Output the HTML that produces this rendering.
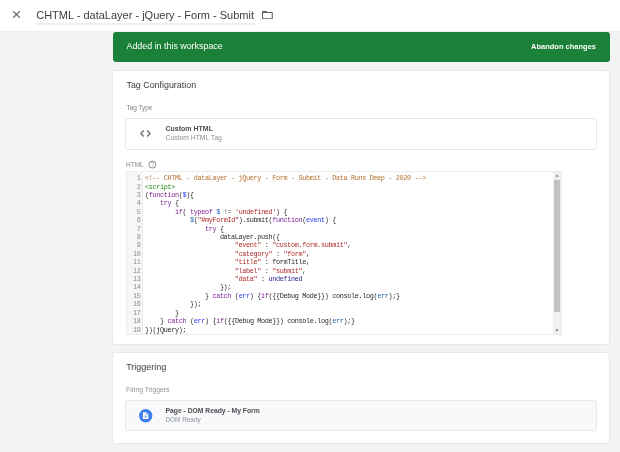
<!DOCTYPE html>
<html><head><meta charset="utf-8">
<style>
*{margin:0;padding:0;box-sizing:border-box}
html,body{width:620px;height:452px;overflow:hidden}
#root{position:absolute;left:0;top:0;width:620px;height:452px;overflow:hidden;will-change:transform}
body{background:#f1f3f4;font-family:"Liberation Sans",sans-serif;position:relative;color:#202124}
.abs{position:absolute;white-space:pre;line-height:1}
#hdr{position:absolute;left:0;top:0;width:620px;height:31px;background:#fff;box-shadow:0 0.5px 1.5px rgba(0,0,0,0.06)}
#green{position:absolute;left:113px;top:32px;width:496.5px;height:29.8px;background:#1b8038;border-radius:3px}
.card{position:absolute;left:113px;width:496px;background:#fff;border-radius:3px;box-shadow:0 0 0 1px #e6e8eb}
.box{position:absolute;left:125px;width:472px;border:1px solid #e5e7ea;border-radius:3px}
#editor{position:absolute;left:126px;top:171px;width:436px;height:163.5px;border:1px solid #ececec;background:#fff;overflow:hidden}
#gutter{position:absolute;left:0;top:0;width:15.5px;height:100%;background:#f7f7f7;border-right:1px solid #ececec}
.ln{position:absolute;right:1.5px;font-family:"Liberation Mono",monospace;font-size:6.8px;letter-spacing:-0.335px;color:#8c8c8c;line-height:8.4px}
#code{position:absolute;left:18px;top:2.2px;font-family:"Liberation Mono",monospace;font-size:6.8px;letter-spacing:-0.335px;line-height:8.4px;color:#2a2a2a;white-space:pre}
.k{color:#80259a}.d{color:#2a3cf0}.v{color:#1f62b0}.s{color:#b02a2a}.c{color:#b5702f}.t{color:#2c8a24}.a{color:#30289e}.o{color:#555}
#sb{position:absolute;right:0;top:0;width:8.2px;height:100%;background:#f1f1f1}
#thumb{position:absolute;left:1px;top:7.5px;width:6.3px;height:132px;background:#c1c1c1}
</style></head>
<body>
<div id="root">
<div id="hdr">
  <svg style="position:absolute;left:12px;top:10.4px" width="9" height="9" viewBox="0 0 9 9"><path d="M1.2 1.2L7.8 7.8M7.8 1.2L1.2 7.8" stroke="#717171" stroke-width="1.25"/></svg>
  <div class="abs" style="left:36.2px;top:9.7px;font-size:11px;color:#3c4043">CHTML - dataLayer - jQuery - Form - Submit</div>
  <div style="position:absolute;left:36px;top:23px;width:218.5px;height:1.7px;background:#eeeeee"></div>
  <svg style="position:absolute;left:262.1px;top:10.6px" width="10.8" height="8.3" viewBox="2 4 20 16" preserveAspectRatio="none"><path d="M20 6h-8l-2-2H4c-1.1 0-2 .9-2 2v12c0 1.1.9 2 2 2h16c1.1 0 2-.9 2-2V8c0-1.1-.9-2-2-2zm0 12H4V8h16v10z" fill="#636363"/></svg>
</div>

<div id="green">
  <div class="abs" style="left:13.5px;top:9.5px;font-size:8.9px;color:#fff">Added in this workspace</div>
  <div class="abs" style="right:13.5px;top:10.5px;font-size:7.5px;color:#fff;font-weight:bold">Abandon changes</div>
</div>

<div class="card" style="top:70.5px;height:273.2px">
  <div class="abs" style="left:13.5px;top:10.5px;font-size:8.9px;color:#3c4043">Tag Configuration</div>
  <div class="abs" style="left:13.5px;top:34.5px;font-size:6.4px;color:#80868b">Tag Type</div>
</div>
<div class="box" style="top:118.3px;height:31.5px;background:#fff">
  <svg style="position:absolute;left:14.4px;top:10.4px" width="11" height="7" viewBox="0 0 11 7"><path d="M3.7 0.5L0.8 3.5L3.7 6.5M7.1 0.5L10.1 3.5L7.1 6.5" fill="none" stroke="#666" stroke-width="1.25"/></svg>
  <div class="abs" style="left:39.5px;top:5.7px;font-size:7px;font-weight:bold;color:#4a4d51">Custom HTML</div>
  <div class="abs" style="left:39.5px;top:15.8px;font-size:6.8px;color:#8a8e93">Custom HTML Tag</div>
</div>
<div class="abs" style="left:126px;top:161.5px;font-size:6.5px;color:#80868b">HTML</div>
<svg style="position:absolute;left:148.1px;top:159.8px" width="9" height="9" viewBox="0 0 9 9"><circle cx="4.4" cy="4.5" r="3.5" fill="none" stroke="#6f7378" stroke-width="0.8"/><path d="M3.3 3.5a1.15 1.15 0 1 1 1.6 1.1c-.35.2-.45.4-.45.8" fill="none" stroke="#8a8e93" stroke-width="0.7"/><circle cx="4.45" cy="6.5" r="0.4" fill="#8a8e93"/></svg>

<div id="editor">
  <div id="gutter"></div>
  <div class="ln" style="top:2.2px;right:auto;left:0;width:13.6px;text-align:right;white-space:pre">1
2
3
4
5
6
7
8
9
10
11
12
13
14
15
16
17
18
19</div>
<div id="code"><span class="c">&lt;!-- CHTML - dataLayer - jQuery - Form - Submit - Data Runs Deep - 2020 --&gt;</span>
<span class="t">&lt;script&gt;</span>
(<span class="k">function</span>(<span class="d">$</span>){
    <span class="k">try</span> {
        <span class="k">if</span>( <span class="k">typeof</span> <span class="v">$</span> <span class="o">!=</span> <span class="s">'undefined'</span>) {
            <span class="v">$</span>(<span class="s">"#myFormId"</span>).submit(<span class="k">function</span>(<span class="d">event</span>) {
                <span class="k">try</span> {
                    dataLayer.push({
                        <span class="s">"event"</span> : <span class="s">"custom.form.submit"</span>,
                        <span class="s">"category"</span> : <span class="s">"form"</span>,
                        <span class="s">"title"</span> : formTitle,
                        <span class="s">"label"</span> : <span class="s">"submit"</span>,
                        <span class="s">"data"</span> : <span class="a">undefined</span>
                    });
                } <span class="k">catch</span> (<span class="d">err</span>) {<span class="k">if</span>({{Debug Mode}}) console.log(<span class="v">err</span>);}
            });
        }
    } <span class="k">catch</span> (<span class="d">err</span>) {<span class="k">if</span>({{Debug Mode}}) console.log(<span class="v">err</span>);}
})(jQuery);</div>
  <div id="sb">
    <svg style="position:absolute;left:2.3px;top:2.3px" width="4" height="3" viewBox="0 0 4 3"><path d="M2 0.2L3.8 2.8H0.2z" fill="#8a8a8a"/></svg>
    <div id="thumb"></div>
    <svg style="position:absolute;left:2.3px;top:156.5px" width="4" height="3" viewBox="0 0 4 3"><path d="M0.2 0.2H3.8L2 2.8z" fill="#8a8a8a"/></svg>
  </div>
</div>

<div class="card" style="top:353px;height:90.2px">
  <div class="abs" style="left:13.2px;top:9.8px;font-size:9px;color:#3c4043">Triggering</div>
  <div class="abs" style="left:13px;top:34px;font-size:6.8px;color:#8e9398">Firing Triggers</div>
</div>
<div class="box" style="top:400px;height:30.8px;background:#f8f9fa">
  <svg style="position:absolute;left:12.9px;top:7.9px" width="14" height="14" viewBox="0 0 14 14"><circle cx="6.7" cy="6.7" r="6.7" fill="#3b7ee9"/><path d="M3.9 3.2H7.6L9.3 4.9V9.9H3.9z" fill="#fff"/><path d="M7.4 3.2V5.1H9.3" fill="none" stroke="#3b7ee9" stroke-width="0.6"/><path d="M5.3 6.5H8L7.7 8.7H5.6z" fill="#8fb5f2"/></svg>
  <div class="abs" style="left:39.5px;top:7px;font-size:6.76px;font-weight:bold;color:#4a4d51">Page - DOM Ready - My Form</div>
  <div class="abs" style="left:39.5px;top:16px;font-size:6.4px;color:#8e9398">DOM Ready</div>
</div>
</div>
</body></html>
